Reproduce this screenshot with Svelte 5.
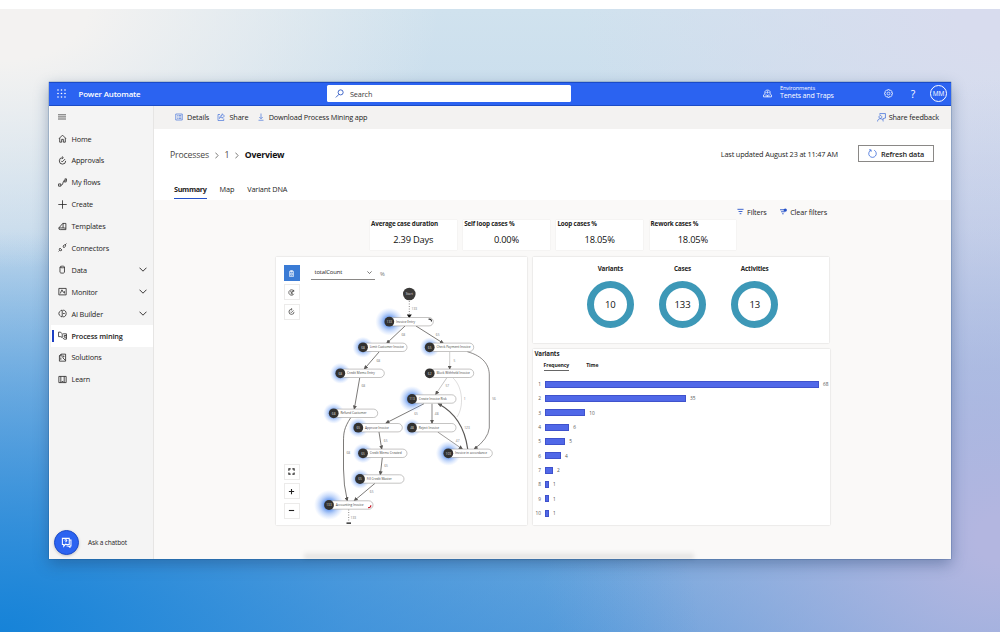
<script lang="ts">
  const navItems = [
    { label: "Home", icon: "home" },
    { label: "Approvals", icon: "approvals" },
    { label: "My flows", icon: "flows" },
    { label: "Create", icon: "plus" },
    { label: "Templates", icon: "templates" },
    { label: "Connectors", icon: "connectors" },
    { label: "Data", icon: "data", expandable: true },
    { label: "Monitor", icon: "monitor", expandable: true },
    { label: "AI Builder", icon: "brain", expandable: true },
    { label: "Process mining", icon: "process", active: true },
    { label: "Solutions", icon: "solutions" },
    { label: "Learn", icon: "learn" },
  ];

  // 16x16 stroke icons
  const icons: Record<string, string> = {
    home: "M2 8 8 2l6 6M3 7v7.500h3.500V9.500h3v5H13V7",
    approvals: "M8 3a5.700 5.700 0 1 0 5.700 5.700M7 .8 9.500 3 7 5.200M5.500 8.500 7.500 10.500 12.500 5.500",
    flows: "M1 10.500h4v4H1zM5 12.500h1.500c3 0 1.500-7 4.500-7M11 3.500h3.500v3.500H11zM12 1.500h3v3",
    plus: "M8 .5v15M.5 8h15",
    templates: "M1.500 10.500 8.500 2.500h5.500v11H4A2.500 2.500 0 0 1 1.500 10.500zh7.500V2.500M9 10.500l5 .5",
    connectors: "M1 15l2-2M3.500 9l3.500 3.500c-1 1.500-3 1.500-4 .5s-1-2.500.5-4zM9 5.500 11 3.500c1-1 3.500 0 2 2.500L10.500 8.500zM12.500 3.500 15 1",
    data: "M3.500 3.500v9.500c0 2 8 2 8 0V3.500c0-2-8-2-8 0zc0 2 8 2 8 0",
    monitor: "M1.500 2.500h13v11.500h-13zM4 11.500l3-6.500 2.500 4.500 2-1.500v3.500",
    brain: "M7.500 2v12c-2 0-3-1-3.500-2-1.500-.5-2.500-2-2.500-4s1-3.500 2.500-4C4.500 3 5.500 2 7.500 2zM9 2c3.500 0 5.500 2.500 5.500 6s-2 6-5.500 6M9 8h3",
    process: "M1 2h3.500l3 3v6.500l-3-1.500H1zM9 5h6v9.500h-4l-2.500-2M11 8h4M11 11h4M11 8v3",
    solutions: "M2.500 5V14.500h11V2H5.500zM5.500 2v3h-3M6 5.500h5l-2.500 3L13 13M5 8v4",
    learn: "M1.500 2.500h13v11h-13zM5 2.500v11M11 2.500v11M6.500 11.500h3",
  };

  const kpis = [
    { label: "Average case duration", value: "2.39 Days" },
    { label: "Self loop cases %", value: "0.00%" },
    { label: "Loop cases %", value: "18.05%" },
    { label: "Rework cases %", value: "18.05%" },
  ];

  const totals = [
    { label: "Variants", value: 10 },
    { label: "Cases", value: 133 },
    { label: "Activities", value: 13 },
  ];

  const variants = [68, 35, 10, 6, 5, 4, 2, 1, 1, 1];
  const unit = 4.03;

  const nodes = [
    { x: 113.3, y: 64.7, n: 133, name: "Invoice Entry", glow: 14 },
    { x: 87, y: 90.3, n: 68, name: "Limit Customer Invoice", glow: 10.5 },
    { x: 153.7, y: 90.3, n: 65, name: "Check Payment Invoice", glow: 10 },
    { x: 64.3, y: 116.3, n: 68, name: "Credit Memo Entry", glow: 10.5 },
    { x: 153.7, y: 116.3, n: 62, name: "Block Withheld Invoice", glow: 0 },
    { x: 136, y: 142, n: 113, name: "Create Invoice Risk", glow: 13 },
    { x: 57.7, y: 156.3, n: 68, name: "Refund Customer", glow: 10.5 },
    { x: 82.3, y: 170.7, n: 65, name: "Approve Invoice", glow: 10 },
    { x: 136, y: 170.7, n: 48, name: "Reject Invoice", glow: 9 },
    { x: 87, y: 196.3, n: 65, name: "Credit Memo Created", glow: 10 },
    { x: 172.3, y: 196.3, n: 103, name: "Invoice in accordance", glow: 12.5 },
    { x: 84, y: 222, n: 65, name: "Fill Credit Master", glow: 10 },
    { x: 53, y: 248, n: 133, name: "Accounting Invoice", glow: 15 },
  ];

  const edges = [
    { d: "M129 69 110.700 86.300", w: 0.8 },
    { d: "M140 69 167.300 86.300", w: 0.8 },
    { d: "M103 95 88.300 112", w: 0.8 },
    { d: "M173.700 95V112", w: 0.3 },
    { d: "M191.300 94.700C207 99 213.300 108 213.300 118V171Q212 182 198.300 192", w: 0.7 },
    { d: "M83.700 121 78.300 152", w: 0.8 },
    { d: "M170.700 121 159.700 137.300", w: 0.35 },
    { d: "M181 160C188 150 187 130 177 121", w: 0.2 },
    { d: "M148 146.700 110 166", w: 0.8 },
    { d: "M156 146.700V166.300", w: 0.7 },
    { d: "M191.700 192C189 172 180 156 162.300 146.700", w: 1.2 },
    { d: "M161.700 175 186.300 192", w: 0.6 },
    { d: "M103 175 105.700 192", w: 0.8 },
    { d: "M106.300 200.700 104.300 217.700", w: 0.8 },
    { d: "M99 226.300 78.300 243.700", w: 0.8 },
    { d: "M74.700 160.700C68 171 67.500 176 67.500 185V212Q67.500 228 71.300 243.700", w: 0.8 },
  ];

  const edgeLabels: [number, number, string][] = [
    [138.3, 52, "133"], [127.3, 77.7, "68"], [161.7, 77.7, "65"], [102.3, 103.7, "68"],
    [178.3, 103.7, "5"], [87.3, 129.3, "68"], [171.3, 129.3, "57"], [188.7, 142.3, "1"],
    [218, 142.3, "56"], [140, 156.7, "65"], [160.7, 156.7, "48"], [191, 170.7, "123"],
    [109.7, 183.7, "65"], [181.7, 183.7, "47"], [72.3, 196.3, "68"], [110, 209.3, "65"],
    [95.7, 235, "65"], [77.3, 261, "133"],
  ];
</script>

<div class="backdrop">
  <div class="window">
    <header>
      <svg class="waffle" viewBox="0 0 9 9">
        {#each [1, 4.5, 8] as y}
          {#each [1, 4.5, 8] as x}
            <circle cx={x} cy={y} r="0.8" />
          {/each}
        {/each}
      </svg>
      <span class="brand">Power Automate</span>
      <div class="search">
        <svg viewBox="0 0 16 16"><circle cx="10" cy="6" r="4.500" /><path d="M7 9.500 1.500 15" /></svg>
        <span>Search</span>
      </div>
      <svg class="env-icon" viewBox="0 0 16 16">
        <path d="M1 14V10.500L3.500 8.500V4.500L6 2h4l2.500 2.500v4L15 10.500V14zM5.500 13.500V9.500M8 14v-3.500M10.500 13.500V9.500M8 4v4M5.500 5v2M10.500 5v2" />
      </svg>
      <div class="env">
        <small>Environments</small>
        <span>Tenets and Traps</span>
      </div>
      <svg class="gear" viewBox="0 0 16 16">
        <path d="M6.500 1h3l.5 2 2-1 2 2-1 2 2 .5v3l-2 .5 1 2-2 2-2-1-.5 2h-3L6 13l-2 1-2-2 1-2-2-.5v-3L3 6 2 4l2-2 2 1z" />
        <circle cx="8" cy="8" r="2.500" />
      </svg>
      <span class="help">?</span>
      <span class="avatar">MM</span>
    </header>

    <div class="body">
      <nav>
        <svg class="burger" viewBox="0 0 8 6"><path d="M0 .8h8M0 2.900h8M0 5h8" /></svg>
        <ul>
          {#each navItems as item}
            <li class:active={item.active}>
              <svg class="icon" viewBox="0 0 16 16"><path d={icons[item.icon]} /></svg>
              <span>{item.label}</span>
              {#if item.expandable}
                <svg class="chevron" viewBox="0 0 8 5"><path d="M.5.7 4 4.200 7.500.7" /></svg>
              {/if}
            </li>
          {/each}
        </ul>
        <div class="chatbot">
          <span class="bubble">
            <svg viewBox="0 0 16 16">
              <path d="M2 2h10v9H6l-2 2.500V11H2zM12 4.500h2.500v8.500H13v2L10.500 13H8" />
              <path d="M5.500 5c0-1.500 3-1.500 3 0 0 1-1.500 1-1.500 2.200M7 8.500v1" />
            </svg>
          </span>
          <span>Ask a chatbot</span>
        </div>
      </nav>

      <main>
        <div class="commands">
          <svg viewBox="0 0 16 16"><path d="M1.500 2h13v12h-13zM4 5h1.500M7 5h5.500M4 8h1.500M7 8h5.500M4 11h1.500M7 11h5.500" /></svg>
          <span>Details</span>
          <svg viewBox="0 0 16 16"><path d="M6 3H2v12h11.500v-4M5 11c0-4 2-6 5-6V1.500L15 6l-5 4.500V8C8 8 6.500 9 5 11z" /></svg>
          <span>Share</span>
          <svg viewBox="0 0 16 16"><path d="M8 1v10M4.500 8 8 11.500 11.500 8M3 14.500h10" /></svg>
          <span>Download Process Mining app</span>
          <svg class="feedback" viewBox="0 0 16 16"><path d="M5 3V1h10v8h-2l-2 2.500V9M6 4.500a2.500 2.500 0 1 0 .1 0M1 15c0-6.500 10-6.500 10 0" /></svg>
          <span>Share feedback</span>
        </div>

        <div class="heading">
          <div class="crumbs">
            <span>Processes</span>
            <svg viewBox="0 0 4 8"><path d="M.5.7 3.500 4 .5 7.300" /></svg>
            <span>1</span>
            <svg viewBox="0 0 4 8"><path d="M.5.7 3.500 4 .5 7.300" /></svg>
            <strong>Overview</strong>
            <span class="updated">Last updated August 23 at 11:47 AM</span>
            <button>
              <svg viewBox="0 0 16 16"><path d="M11 2.200A6.700 6.700 0 1 1 5 2.200M1.800 1.500H5.500V5" /></svg>
              Refresh data
            </button>
          </div>
          <div class="tabs">
            <span class="current">Summary</span>
            <span>Map</span>
            <span>Variant DNA</span>
          </div>
        </div>

        <div class="report">
          <div class="filters">
            <svg viewBox="0 0 8 8"><path d="M.5 1.500h7M1.800 4h4.400M3 6.500h2" /></svg>
            <span>Filters</span>
            <svg viewBox="0 0 8 8"><path d="M0 2h5M1.200 4.300h4.300M2.400 6.600h1.800" /><circle cx="6" cy="2.400" r="1.900" /></svg>
            <span>Clear filters</span>
          </div>

          <div class="kpis">
            {#each kpis as kpi}
              <div class="kpi">
                <b>{kpi.label}</b>
                <span>{kpi.value}</span>
              </div>
            {/each}
          </div>

          <div class="panels">
            <section class="map">
              <svg class="graph" viewBox="0 0 252 268">
                <defs>
                  <radialGradient id="glow">
                    <stop offset="0.3" stop-color="#3f7de8" stop-opacity="0.8" />
                    <stop offset="0.6" stop-color="#5d93f0" stop-opacity="0.4" />
                    <stop offset="1" stop-color="#8fb6ff" stop-opacity="0" />
                  </radialGradient>
                  <marker id="arrow" markerUnits="userSpaceOnUse" markerWidth="5" markerHeight="4" refX="3.500" refY="2" orient="auto">
                    <path d="M0 0 4.500 2 0 4z" fill="#5a5856" />
                  </marker>
                </defs>
                {#each edges as edge}
                  <path class="edge" d={edge.d} stroke-width={edge.w} marker-end={edge.w > 0.2 ? "url(#arrow)" : undefined} />
                {/each}
                <path class="edge dotted" d="M133.300 44V57M72.700 252.500V265" />
                <path d="M130.800 57.500h5l-2.500 3.800zM70.500 265.500h4.500v1.200h-4.500z" />
                {#each edgeLabels as [x, y, text]}
                  <text class="count" {x} y={y + 1.1}>{text}</text>
                {/each}
                <circle cx="133.300" cy="37" r="6.300" fill="#3b3a39" />
                <text class="badge" x="133.300" y="38.200">Start</text>
                {#each nodes as node}
                  <circle cx={node.x} cy={node.y} r={node.glow} fill="url(#glow)" />
                  <rect class="pill" x={node.x} y={node.y - 4.2} width="44" height="8.400" rx="4.200" />
                  <circle cx={node.x} cy={node.y} r="4.900" fill="#323130" />
                  <text class="badge" x={node.x} y={node.y + 1.2}>{node.n}</text>
                  <text class="name" x={node.x + 6.7} y={node.y + 1.1}>{node.name}</text>
                {/each}
                <path class="loop" d="M152.500 62.300q3-.8 3 2.200" />
                <path class="loop red" d="M94.800 248.300q.3 2.300-2.800 2.400" />
              </svg>
              <div class="tools">
                <button class="on"><svg viewBox="0 0 16 16"><path d="M3.500 3h9v12h-9zM6 1h4v2.500H6zM6 6.500v5.500h4V6.500zM8 8v2" /></svg></button>
                <button><svg viewBox="0 0 16 16"><path d="M13.500 11A6.200 6.200 0 1 1 13.500 5M13 2v3.500H9.500M11.500 7H7.500v4h4M5 5l3 2" /></svg></button>
                <button><svg viewBox="0 0 16 16"><path d="M8 3a5.800 5.800 0 1 0 5.800 5.800M7 .8 9.500 3 7 5.200M5.500 8.500 7.500 10.500 12.500 5.500" /></svg></button>
              </div>
              <div class="metric">
                <span>totalCount</span>
                <svg viewBox="0 0 8 5"><path d="M.5.7 4 4.200 7.500.7" /></svg>
              </div>
              <span class="percent">%</span>
              <div class="zoom">
                <button><svg viewBox="0 0 16 16"><path d="M2 6V2h4M10 2h4v4M14 10v4h-4M6 14H2v-4" /></svg></button>
                <button><svg viewBox="0 0 16 16"><path d="M8 2v12M2 8h12" /></svg></button>
                <button><svg viewBox="0 0 16 16"><path d="M2 8h12" /></svg></button>
              </div>
            </section>

            <div class="side">
              <section class="totals">
                {#each totals as total}
                  <div>
                    <b>{total.label}</b>
                    <span class="ring">{total.value}</span>
                  </div>
                {/each}
              </section>
              <section class="variants">
                <h2>Variants</h2>
                <div class="modes">
                  <b class="current">Frequency</b>
                  <b>Time</b>
                </div>
                {#each variants as count, i}
                  <div class="row">
                    <span class="index">{i + 1}</span>
                    <span class="bar" style="width: {count * unit}px"></span>
                    <span>{count}</span>
                  </div>
                {/each}
              </section>
            </div>
          </div>
          <div class="shade"></div>
        </div>
      </main>
    </div>
  </div>
</div>

<style>
  :global(body) {
    margin: 0;
    background: #fff;
  }

  .backdrop {
    box-sizing: border-box;
    width: 1000px;
    height: 623px;
    margin-top: 9px;
    padding: 73px 49px 0;
    overflow: hidden;
    background:
      radial-gradient(ellipse 440px 260px at 0 0, #f3f2f1 20%, #f3f2f100 100%),
      radial-gradient(ellipse 700px 400px at 0 100%, #1683d8 0%, #2f8ddb99 50%, #4a9ade00 100%),
      radial-gradient(ellipse 460px 460px at 100% 85%, #b3b6e0 5%, #b3b6e000 100%),
      radial-gradient(ellipse 420px 360px at 100% 0, #d8dcee 10%, #d8dcee00 100%),
      linear-gradient(#d0e2ee 0%, #c3d9ec 35%, #8ebae2 70%, #5f9fdb 100%);
    font-family: "Open Sans", "Noto Sans", sans-serif;
    font-size: 7.300px;
    letter-spacing: -0.150px;
    color: #242322;
  }

  svg {
    display: block;
    flex: none;
    fill: none;
    stroke: currentColor;
  }

  button {
    font: inherit;
    letter-spacing: inherit;
    color: inherit;
    padding: 0;
  }

  .window {
    width: 902px;
    height: 477px;
    display: flex;
    flex-direction: column;
    background: #faf9f8;
    box-shadow: 0 0 1px #0a3e78, 0 5px 14px #1b3d6a66;
  }

  header {
    box-sizing: border-box;
    height: 24px;
    flex: none;
    display: flex;
    align-items: center;
    padding: 0 4px 1px 8px;
    background: #2b63f1;
    border: solid #1b4bc6;
    border-width: 1px 0;
    color: #fff;
  }

  .waffle {
    width: 9px;
    height: 9px;
    fill: #fff;
    stroke: none;
  }

  .brand {
    width: 248.500px;
    margin-left: 12.500px;
    font-size: 7.900px;
    font-weight: 600;
  }

  .search {
    box-sizing: border-box;
    width: 244px;
    height: 17px;
    display: flex;
    align-items: center;
    gap: 6px;
    padding-left: 8px;
    background: #fff;
    border-radius: 1.500px;
    color: #3b3a39;
  }

  .search svg {
    width: 9px;
    height: 9px;
    color: #2350c0;
    stroke-width: 1.500;
  }

  .env-icon {
    width: 9px;
    height: 9px;
    margin-left: 192px;
    stroke-width: 1.400;
  }

  .env {
    width: 104px;
    display: flex;
    flex-direction: column;
    margin: -2px 0 0 8px;
    font-size: 7px;
    line-height: 8.500px;
  }

  .env small {
    font-size: 5.700px;
    line-height: 7.500px;
  }

  .gear {
    width: 9px;
    height: 9px;
    margin-left: -0.500px;
    stroke-width: 1.300;
  }

  .help {
    width: 20px;
    text-align: center;
    margin-left: 10.500px;
    font-size: 10.500px;
  }

  .avatar {
    box-sizing: border-box;
    width: 17px;
    height: 17px;
    flex: none;
    margin-left: auto;
    border: 1px solid #fff;
    border-radius: 50%;
    text-align: center;
    font-size: 6.500px;
    line-height: 15px;
  }

  .body {
    flex: 1;
    display: flex;
    min-height: 0;
  }

  nav {
    box-sizing: border-box;
    width: 105px;
    flex: none;
    display: flex;
    flex-direction: column;
    background: #f4f4f4;
    border-left: 1px solid #fcfcfc;
    border-right: 1px solid #e6e5e4;
  }

  .burger {
    width: 8px;
    height: 6px;
    margin: 8px 0 7.600px 8px;
    color: #555;
    stroke-width: 0.900;
  }

  ul {
    list-style: none;
    margin: 0;
    padding: 0;
  }

  li {
    box-sizing: border-box;
    height: 21.900px;
    display: flex;
    align-items: center;
    padding: 0 6.500px 0 5px;
    border-left: 2px solid transparent;
    margin-left: 1px;
  }

  li.active {
    background: linear-gradient(#1c3fc4, #1c3fc4) 1px center / 2px 12px no-repeat #fff;
    border-left: none;
    padding-left: 7px;
    font-weight: 600;
  }

  .icon {
    width: 9px;
    height: 9px;
    margin: 0 5px 0 -0.500px;
    stroke-width: 1.400;
  }

  .chevron {
    width: 8px;
    height: 5px;
    margin-left: auto;
    stroke-width: 0.900;
  }

  .chatbot {
    display: flex;
    align-items: center;
    gap: 9px;
    margin: auto 0 4.500px 4px;
    font-size: 6.500px;
  }

  .bubble {
    box-sizing: border-box;
    width: 25px;
    height: 25px;
    display: grid;
    place-items: center;
    background: #2b63f1;
    border: 1px solid #1c4cc8;
    border-radius: 50%;
    color: #fff;
    box-shadow: 0 1px 3px #0003;
  }

  .bubble svg {
    width: 11px;
    height: 11px;
    stroke-width: 1.500;
  }

  main {
    flex: 1;
    display: flex;
    flex-direction: column;
    min-width: 0;
  }

  .commands {
    box-sizing: border-box;
    height: 23px;
    display: flex;
    align-items: center;
    padding: 0 12px 1px 21px;
    background: #f3f2f1;
  }

  .commands svg {
    width: 8px;
    height: 8px;
    margin-right: 4px;
    color: #2b5fd6;
    stroke-width: 1.200;
  }

  .commands span + svg {
    margin-left: 8.300px;
  }

  .commands span + .feedback {
    width: 9px;
    height: 9px;
    margin: 0 3px 0 auto;
  }

  .heading {
    height: 71px;
    background: #fff;
  }

  .crumbs {
    display: flex;
    align-items: center;
    height: 18px;
    padding: 17px 17px 0 16px;
    font-size: 8.700px;
    color: #484644;
  }

  .crumbs > svg {
    width: 3.500px;
    height: 7px;
    margin: 0 6px;
    stroke-width: 0.800;
  }

  .crumbs strong {
    color: #111;
    font-weight: 700;
    letter-spacing: -0.200px;
  }

  .updated {
    margin: -3px 20px 0 auto;
    font-size: 7.300px;
    color: #242322;
  }

  .crumbs button {
    box-sizing: border-box;
    width: 76px;
    height: 17px;
    display: flex;
    align-items: center;
    justify-content: center;
    gap: 4px;
    margin-top: -3px;
    background: #fff;
    border: 1px solid #8a8886;
    font-size: 7.300px;
    font-weight: 600;
    color: #242322;
  }

  .crumbs button svg {
    width: 9px;
    height: 9px;
    color: #2b5fd6;
    stroke-width: 1.300;
  }

  .tabs {
    display: flex;
    gap: 13px;
    margin: 16.500px 0 0 20px;
    line-height: 17px;
  }

  .tabs .current {
    font-weight: 700;
    letter-spacing: -0.350px;
    border-bottom: 1.500px solid #2350c8;
  }

  .report {
    flex: 1;
    position: relative;
    padding: 0 0 0 122px;
  }

  .filters {
    height: 20px;
    width: 551px;
    display: flex;
    align-items: center;
    justify-content: flex-end;
    padding-top: 4px;
    box-sizing: border-box;
  }

  .filters svg {
    width: 7px;
    height: 7px;
    margin: -2px 3.500px 0 13px;
    color: #2350c8;
    stroke-width: 1;
  }

  .filters circle {
    fill: #2350c8;
    stroke: none;
  }

  .kpis {
    display: flex;
    gap: 6.700px;
    padding-left: 94px;
  }

  .kpi {
    width: 86.500px;
    height: 30px;
    display: flex;
    flex-direction: column;
    background: #fff;
    box-shadow: 0 0 1px #0002;
  }

  .kpi b {
    padding-left: 1px;
    font-size: 6.300px;
    line-height: 8px;
    white-space: nowrap;
  }

  .kpi span {
    text-align: center;
    font-size: 9.300px;
    letter-spacing: -0.200px;
    line-height: 24px;
    color: #111;
  }

  .panels {
    display: flex;
    gap: 5.500px;
    margin-top: 7px;
  }

  section {
    background: #fff;
    box-shadow: 0 0 1.500px #0003;
  }

  .map {
    position: relative;
    width: 251px;
    height: 268px;
  }

  .graph {
    width: 252px;
    height: 268px;
    letter-spacing: 0;
    stroke: none;
    fill: #111;
  }

  .edge {
    fill: none;
    stroke: #5a5856;
  }

  .dotted {
    stroke-width: 0.700;
    stroke-dasharray: 1 1.500;
  }

  .pill {
    fill: #fff;
    stroke: #8a8886;
    stroke-width: 0.500;
  }

  .count {
    font-size: 3.200px;
    fill: #777;
    text-anchor: middle;
  }

  .badge {
    font-size: 3.200px;
    fill: #ddd;
    text-anchor: middle;
  }

  .name {
    font-size: 3.200px;
    fill: #444;
  }

  .loop {
    fill: none;
    stroke: #222;
    stroke-width: 1.100;
  }

  .loop.red {
    stroke: #c50f1f;
  }

  .tools,
  .zoom {
    position: absolute;
    left: 7.700px;
    display: flex;
    flex-direction: column;
    gap: 3.300px;
  }

  .tools {
    top: 8px;
  }

  .zoom {
    bottom: 6.500px;
  }

  .map button {
    box-sizing: border-box;
    width: 16.300px;
    height: 16px;
    display: grid;
    place-items: center;
    background: #fff;
    border: 1px solid #ecebea;
  }

  .map button.on {
    background: #3a7bd5;
    border-color: #3a7bd5;
    color: #fff;
  }

  .map button svg {
    width: 7px;
    height: 7px;
    stroke-width: 1.500;
  }

  .zoom button svg {
    stroke-width: 2.500;
  }

  .metric {
    position: absolute;
    top: 8px;
    left: 34.500px;
    box-sizing: border-box;
    width: 64.500px;
    height: 15px;
    display: flex;
    align-items: center;
    justify-content: space-between;
    padding: 0 3px 0 4px;
    border-bottom: 1px solid #8a8886;
    font-size: 5.900px;
    letter-spacing: -0.150px;
  }

  .metric svg {
    width: 5px;
    height: 3px;
  }

  .percent {
    position: absolute;
    top: 13px;
    left: 104px;
    font-size: 5.800px;
    color: #777;
  }

  .side {
    display: flex;
    flex-direction: column;
    gap: 6px;
  }

  .totals {
    box-sizing: border-box;
    width: 296px;
    height: 86px;
    display: flex;
    justify-content: center;
    gap: 24.700px;
    padding: 7px 0 0 4px;
  }

  .totals b {
    display: block;
    font-size: 6.300px;
    line-height: 9px;
    text-align: center;
  }

  .ring {
    box-sizing: border-box;
    width: 47.500px;
    height: 47.500px;
    display: grid;
    place-items: center;
    margin-top: 7.500px;
    border: 7px solid #3d98b7;
    border-radius: 50%;
    font-size: 9.500px;
    color: #111;
  }

  .variants {
    box-sizing: border-box;
    width: 297.500px;
    height: 176px;
    padding-left: 2px;
  }

  h2 {
    margin: 0;
    font-size: 6.200px;
    line-height: 10px;
  }

  .modes {
    display: flex;
    gap: 17px;
    height: 18px;
    padding: 3px 0 0 9px;
    box-sizing: border-box;
    font-size: 5.100px;
    letter-spacing: -0.100px;
    line-height: 7.500px;
  }

  .modes .current {
    align-self: flex-start;
    border-bottom: 0.500px solid #666;
  }

  .row {
    height: 14.330px;
    display: flex;
    align-items: center;
    gap: 4px;
    font-size: 4.800px;
    letter-spacing: 0;
    color: #555;
  }

  .index {
    width: 6.500px;
    text-align: right;
  }

  .bar {
    box-sizing: border-box;
    height: 7px;
    background: #5068e8;
    border: 1px solid #3f52cc;
  }

  .shade {
    position: absolute;
    left: 150px;
    bottom: 0;
    width: 390px;
    height: 8px;
    background: linear-gradient(#0000, #00000020);
    filter: blur(2px);
  }
</style>
